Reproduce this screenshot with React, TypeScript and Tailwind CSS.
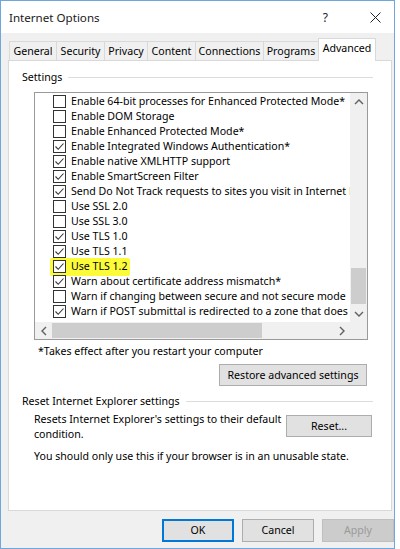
import React from "react";

const settings: { label: string; checked: boolean; marked?: boolean }[] = [
  { label: "Enable 64-bit processes for Enhanced Protected Mode*", checked: false },
  { label: "Enable DOM Storage", checked: false },
  { label: "Enable Enhanced Protected Mode*", checked: false },
  { label: "Enable Integrated Windows Authentication*", checked: true },
  { label: "Enable native XMLHTTP support", checked: true },
  { label: "Enable SmartScreen Filter", checked: true },
  { label: "Send Do Not Track requests to sites you visit in Internet Explorer*", checked: true },
  { label: "Use SSL 2.0", checked: false },
  { label: "Use SSL 3.0", checked: false },
  { label: "Use TLS 1.0", checked: true },
  { label: "Use TLS 1.1", checked: true },
  { label: "Use TLS 1.2", checked: true, marked: true },
  { label: "Warn about certificate address mismatch*", checked: true },
  { label: "Warn if changing between secure and not secure mode", checked: false },
  { label: "Warn if POST submittal is redirected to a zone that does not permit posts", checked: true },
];

const tabs = [
  { name: "General", w: "w-[47px]" },
  { name: "Security", w: "w-[48px]" },
  { name: "Privacy", w: "w-[43px]" },
  { name: "Content", w: "w-[48px]" },
  { name: "Connections", w: "w-[68px]" },
  { name: "Programs", w: "w-[55px]" },
];

function Chevron({ dir }: { dir: "up" | "down" | "left" | "right" }) {
  const d = {
    up: "M1 6 L5 2 L9 6",
    down: "M1 2 L5 6 L9 2",
    left: "M6 1 L2 5 L6 9",
    right: "M2 1 L6 5 L2 9",
  }[dir];
  const vertical = dir === "up" || dir === "down";
  return (
    <svg width={vertical ? 10 : 8} height={vertical ? 8 : 10} viewBox={vertical ? "0 0 10 8" : "0 0 8 10"}>
      <path d={d} fill="none" stroke="#606060" strokeWidth="1.4" />
    </svg>
  );
}

function CheckBox({ checked }: { checked: boolean }) {
  return (
    <div className="w-[13px] h-[13px] border border-[#333333] bg-white flex items-center justify-center shrink-0">
      {checked && (
        <svg width="11" height="11" viewBox="0 0 11 11">
          <path d="M1.5 5.5 L4.2 8.3 L9.5 2.5" fill="none" stroke="#333333" strokeWidth="1.1" />
        </svg>
      )}
    </div>
  );
}

function WinButton({ children, className = "" }: { children: React.ReactNode; className?: string }) {
  return (
    <div className={`h-[22px] border border-[#adadad] bg-[#e1e1e1] flex items-center justify-center whitespace-nowrap ${className}`}>
      {children}
    </div>
  );
}

export default function App() {
  return (
    <div className="w-[400px] h-[549px] bg-white text-black text-[10.6px] leading-[15px] font-['Noto_Sans','Liberation_Sans',sans-serif]">
      <div className="w-[395px] h-[549px] border border-[#6ea7dc] bg-[#f0f0f0] flex flex-col">
        {/* Title bar */}
        <div className="h-[32px] bg-white flex items-center pl-[8px] shrink-0">
          <span className="text-[11.6px] text-[#1a1a1a]">Internet Options</span>
          <span className="ml-auto text-[12px] text-[#222]">?</span>
          <span className="ml-[42px] mr-[13px] flex items-center">
            <svg width="11" height="11" viewBox="0 0 11 11">
              <path d="M0.5 0.5 L10.5 10.5 M10.5 0.5 L0.5 10.5" stroke="#222" strokeWidth="1" />
            </svg>
          </span>
        </div>

        {/* Tabs */}
        <div className="h-[27px] pl-[8px] flex items-end shrink-0">
          {tabs.map((t) => (
            <div
              key={t.name}
              className={`${t.w} h-[20px] border-t border-l border-[#d9d9d9] flex items-center justify-center -mb-px bg-[#f0f0f0]`}
            >
              {t.name}
            </div>
          ))}
          <div className="w-[58px] h-[23px] border-t border-l border-r border-[#d9d9d9] bg-white flex items-center justify-center pb-[3px] -mb-px relative z-10">
            Advanced
          </div>
        </div>

        {/* Panel */}
        <div className="ml-[7px] w-[384px] h-[451px] border border-[#d9d9d9] bg-white pl-[13px] pr-[18px] pt-[9px] shrink-0">
          <div className="flex items-center">
            <span>Settings</span>
            <div className="flex-1 h-px bg-[#dcdcdc] ml-[6px]" />
          </div>

          <div className="pl-[12px] pr-[5px]">
            {/* List */}
            <div className="mt-[7px] h-[248px] border border-[#9a9a9a] flex flex-col">
              <div className="flex flex-1 min-h-0">
                <div className="flex-1 min-w-0 overflow-hidden pt-[1px]">
                  {settings.map((s) => (
                    <div key={s.label} className="h-[15px] flex items-center pl-[18px] whitespace-nowrap relative">
                      {s.marked && (
                        <div className="absolute left-[15px] top-[-1px] w-[80px] h-[18px] bg-[#fbfb3a] rounded-[2px]" />
                      )}
                      <div className="relative flex items-center gap-[5px]">
                        <CheckBox checked={s.checked} />
                        <span>{s.label}</span>
                      </div>
                    </div>
                  ))}
                </div>
                <div className="w-[17px] bg-[#f0f0f0] flex flex-col items-center shrink-0">
                  <div className="h-[17px] flex items-center justify-center">
                    <Chevron dir="up" />
                  </div>
                  <div className="flex-1 w-full flex flex-col pt-[158px] pb-[1px]">
                    <div className="h-[36px] mx-[1px] bg-[#cdcdcd]" />
                  </div>
                  <div className="h-[17px] flex items-center justify-center">
                    <Chevron dir="down" />
                  </div>
                </div>
              </div>
              <div className="h-[17px] flex shrink-0">
                <div className="flex-1 bg-[#f0f0f0] flex items-center">
                  <div className="w-[17px] flex justify-center">
                    <Chevron dir="left" />
                  </div>
                  <div className="w-[210px] h-[15px] bg-[#cdcdcd]" />
                  <div className="ml-auto w-[17px] flex justify-center">
                    <Chevron dir="right" />
                  </div>
                </div>
                <div className="w-[17px] bg-[#f0f0f0]" />
              </div>
            </div>

            <div className="mt-[4px] pl-[4px]">*Takes effect after you restart your computer</div>

            <div className="flex justify-end mt-[5px] pr-px">
              <WinButton className="w-[148px]">Restore advanced settings</WinButton>
            </div>
          </div>

          <div className="flex items-center mt-[8px]">
            <span>Reset Internet Explorer settings</span>
            <div className="flex-1 h-px bg-[#dcdcdc] ml-[6px]" />
          </div>

          <div className="pl-[12px] pr-px">
            <div className="flex items-start mt-[3px]">
              <div className="w-[250px]">Resets Internet Explorer's settings to their default condition.</div>
              <WinButton className="ml-auto mt-[3px] w-[86px]">Reset...</WinButton>
            </div>
            <div className="mt-[7px]">You should only use this if your browser is in an unusable state.</div>
          </div>
        </div>

        {/* Dialog buttons */}
        <div className="flex justify-end gap-[8px] mt-[8px]">
          <div className="w-[72px] h-[23px] border-2 border-[#0078d7] bg-[#e1e1e1] flex items-center justify-center">
            OK
          </div>
          <div className="w-[72px] h-[23px] border border-[#adadad] bg-[#e1e1e1] flex items-center justify-center">
            Cancel
          </div>
          <div className="w-[72px] h-[23px] border border-[#bfbfbf] bg-[#cccccc] text-[#9a9a9a] flex items-center justify-center">
            Apply
          </div>
        </div>
      </div>
    </div>
  );
}
